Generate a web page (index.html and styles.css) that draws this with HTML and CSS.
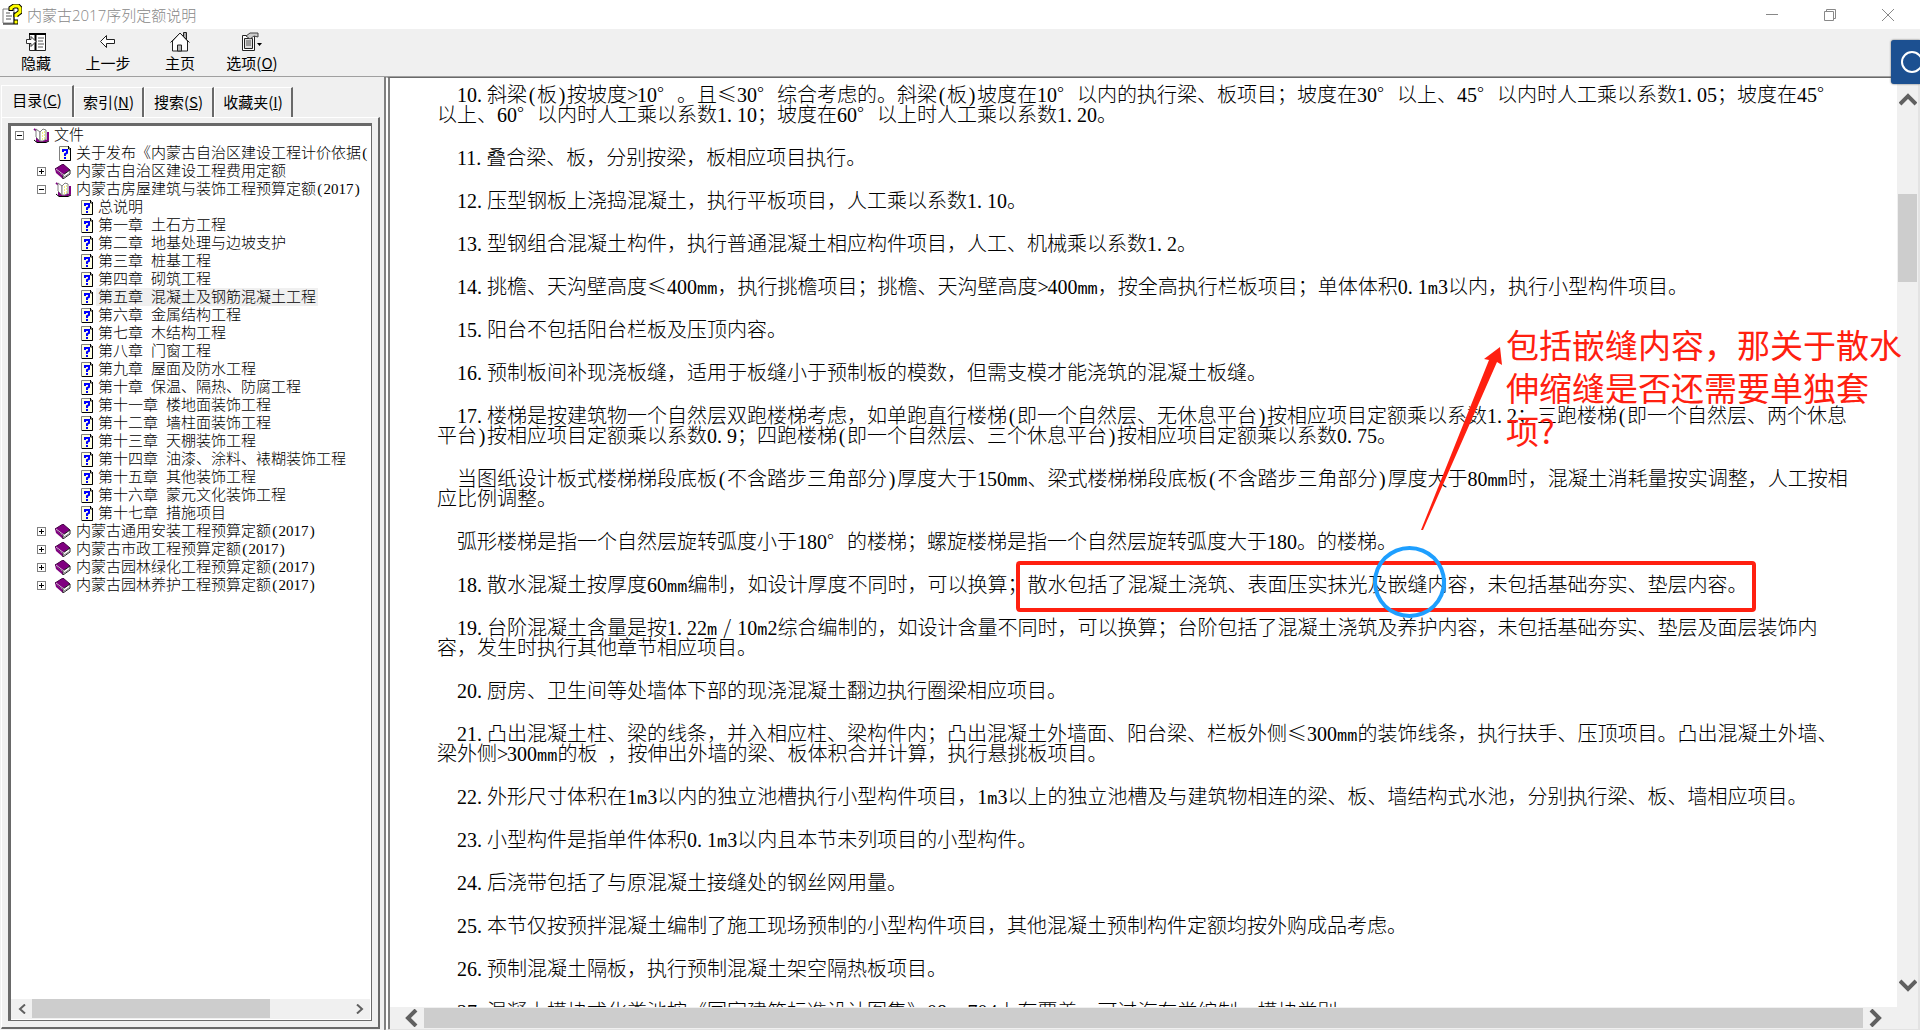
FILE: index.html
```html
<!DOCTYPE html>
<html lang="zh-CN">
  <head>
    <meta charset="UTF-8" />
    <meta name="viewport" content="width=device-width, initial-scale=1.0" />
    <title>内蒙古2017序列定额说明</title>
    <link rel="stylesheet" href="styles.css">
  </head>

  <body>
    <svg class="defs" width="0" height="0">
      <symbol id="open" viewBox="0 0 16 15">
        <path d="M1 1l3 2v10h9l2-1V4" fill="none" stroke="#800080" stroke-width="2" />
        <path d="M3 1l4 3v9L3 9z" fill="#fff" stroke="#808080" />
        <path d="M7 4l3-3 3 1v9l-3 2H7z" fill="#fff" stroke="#808080" />
        <path d="M9 5h1M11 4h1M9 8h1M11 7h1M9 11h1M11 10h1" stroke="#dd0" />
        <path d="M1 12l3 2.500h9l3-1.500" fill="none" stroke="#000" />
      </symbol>
      <symbol id="book" viewBox="0 0 16 15">
        <path d="M0 5l8-5 7 6-7 5z" fill="#800080" stroke="#400040" />
        <path d="M0 5l8 7v3L1 9z" fill="#800080" />
        <path d="M8 11l7-5v4l-7 5z" fill="#fff" stroke="#222" />
        <path d="M9 13l6-4" stroke="#808080" />
        <path d="M1 5l8 6" stroke="#fff" stroke-width="0.7" />
      </symbol>
      <symbol id="page" viewBox="0 0 12 15">
        <path d="M0.500 0.500h9l2 2v12h-11z" fill="#ffffe0" stroke="#808080" />
        <path d="M11.500 2v12.500H1M9.500 0v3h2" fill="none" stroke="#000" />
        <path d="M4 6V4h4v3L6 8v2M5 12h2" fill="none" stroke="#00f" stroke-width="2" />
      </symbol>
    </svg>

    <div class="window">
      <header class="titlebar">
        <svg class="app-icon" width="20" height="21" viewBox="0 0 20 21">
          <path d="M1 5h11v14H1z" fill="#fff" stroke="#808080" />
          <path d="M12 8v12H1" fill="none" stroke="#000" />
          <path d="M4 9h4M4 12h6M4 15h5" stroke="#555" />
          <path d="M9 7V4l3-2h4l2 2v4l-4 3v2M12 18h4" fill="none" stroke="#000" stroke-width="5" />
          <path d="M9 6V4l3-2h4l2 2v4l-4 3v2M12.500 18h3" fill="none" stroke="#ff0" stroke-width="3" />
        </svg>
        <h1>内蒙古2017序列定额说明</h1>
        <div class="window-buttons">
          <button type="button" aria-label="最小化">
            <svg width="12" height="12" viewBox="0 0 12 12"><path d="M0 5.500h12" /></svg>
          </button>
          <button type="button" aria-label="还原">
            <svg width="12" height="12" viewBox="0 0 12 12"><path d="M0.500 2.500h9v9h-9zM2.500 2V0.500h9v9H10" /></svg>
          </button>
          <button type="button" aria-label="关闭">
            <svg width="12" height="12" viewBox="0 0 12 12"><path d="M0 0l12 12M12 0L0 12" /></svg>
          </button>
        </div>
      </header>

      <nav class="toolbar">
        <button type="button">
          <svg width="20" height="20" viewBox="0 0 20 20">
            <path d="M3.500 1.500h16v17h-16z" fill="#fff" stroke="#222" />
            <path d="M3 2h17M9.500 2v16" stroke="#000" stroke-width="2" />
            <path d="M12 6h6M12 9h5M12 12h6M12 15h5" stroke="#555" />
            <path d="M0.500 7.500H5V4.500l5 5-5 5v-3H0.500z" fill="#fff" stroke="#333" />
          </svg>
          隐藏
        </button>
        <button type="button">
          <svg width="20" height="20" viewBox="0 0 20 20">
            <path d="M2.500 9.500l6-6v4h8v4h-8v4z" fill="#fff" stroke="#222" />
          </svg>
          上一步
        </button>
        <button type="button">
          <svg width="20" height="20" viewBox="0 0 20 20">
            <path d="M13.500 4V0.500h3V8" fill="#aaa" stroke="#222" />
            <path d="M2.500 9L10 1l7.500 8v10h-15z" fill="#fff" stroke="#222" />
            <path d="M0.500 10.500L10 1l9.500 9.500" fill="none" stroke="#222" />
            <path d="M7.500 19v-6h4v6z" fill="#bbb" stroke="#222" />
          </svg>
          主页
        </button>
        <button type="button">
          <svg width="20" height="20" viewBox="0 0 20 20">
            <path d="M0.500 3.500h12v15H0.500z" fill="#fff" stroke="#222" />
            <path d="M2.500 6.500h8v10h-8z" fill="#ddd" stroke="#222" />
            <path d="M4 9h5M4 11h5M4 13h5" stroke="#555" />
            <path d="M4 4l4-3h8v4l-4-1-4 3z" fill="#ccc" stroke="#444" />
            <path d="M15 11h5l-2.500 3z" />
          </svg>
          <span>选项(<u>O</u>)</span>
        </button>
      </nav>

      <main class="workspace">
        <aside class="sidebar">
          <div class="tabs" role="tablist">
            <button type="button" role="tab" class="tab active" aria-selected="true">目录(<u>C</u>)</button>
            <button type="button" role="tab" class="tab">索引(<u>N</u>)</button>
            <button type="button" role="tab" class="tab">搜索(<u>S</u>)</button>
            <button type="button" role="tab" class="tab last">收藏夹(<u>I</u>)</button>
          </div>
          <div class="tab-panel">
            <div class="tree-box">
              <div class="tree">
                <ul>
                  <li>
                    <div class="row"><button type="button" class="toggle minus" aria-label="折叠"></button><svg class="icon"><use href="#open" /></svg><a href="#">文件</a></div>
                    <ul>
                      <li><div class="row"><svg class="icon topic"><use href="#page" /></svg><a href="#">关于发布《内蒙古自治区建设工程计价依据<span class="p">(</span></a></div></li>
                      <li><div class="row"><button type="button" class="toggle" aria-label="展开"></button><svg class="icon"><use href="#book" /></svg><a href="#">内蒙古自治区建设工程费用定额</a></div></li>
                      <li>
                        <div class="row"><button type="button" class="toggle minus" aria-label="折叠"></button><svg class="icon"><use href="#open" /></svg><a href="#">内蒙古房屋建筑与装饰工程预算定额<span class="p">(</span>2017<span class="p">)</span></a></div>
                        <ul>
                          <li><div class="row"><svg class="icon topic"><use href="#page" /></svg><a href="#">总说明</a></div></li>
                          <li><div class="row"><svg class="icon topic"><use href="#page" /></svg><a href="#"><span class="no">第一章</span>土石方工程</a></div></li>
                          <li><div class="row"><svg class="icon topic"><use href="#page" /></svg><a href="#"><span class="no">第二章</span>地基处理与边坡支护</a></div></li>
                          <li><div class="row"><svg class="icon topic"><use href="#page" /></svg><a href="#"><span class="no">第三章</span>桩基工程</a></div></li>
                          <li><div class="row"><svg class="icon topic"><use href="#page" /></svg><a href="#"><span class="no">第四章</span>砌筑工程</a></div></li>
                          <li><div class="row"><svg class="icon topic"><use href="#page" /></svg><a href="#" class="current"><span class="no">第五章</span>混凝土及钢筋混凝土工程</a></div></li>
                          <li><div class="row"><svg class="icon topic"><use href="#page" /></svg><a href="#"><span class="no">第六章</span>金属结构工程</a></div></li>
                          <li><div class="row"><svg class="icon topic"><use href="#page" /></svg><a href="#"><span class="no">第七章</span>木结构工程</a></div></li>
                          <li><div class="row"><svg class="icon topic"><use href="#page" /></svg><a href="#"><span class="no">第八章</span>门窗工程</a></div></li>
                          <li><div class="row"><svg class="icon topic"><use href="#page" /></svg><a href="#"><span class="no">第九章</span>屋面及防水工程</a></div></li>
                          <li><div class="row"><svg class="icon topic"><use href="#page" /></svg><a href="#"><span class="no">第十章</span>保温、隔热、防腐工程</a></div></li>
                          <li><div class="row"><svg class="icon topic"><use href="#page" /></svg><a href="#"><span class="no">第十一章</span>楼地面装饰工程</a></div></li>
                          <li><div class="row"><svg class="icon topic"><use href="#page" /></svg><a href="#"><span class="no">第十二章</span>墙柱面装饰工程</a></div></li>
                          <li><div class="row"><svg class="icon topic"><use href="#page" /></svg><a href="#"><span class="no">第十三章</span>天棚装饰工程</a></div></li>
                          <li><div class="row"><svg class="icon topic"><use href="#page" /></svg><a href="#"><span class="no">第十四章</span>油漆、涂料、裱糊装饰工程</a></div></li>
                          <li><div class="row"><svg class="icon topic"><use href="#page" /></svg><a href="#"><span class="no">第十五章</span>其他装饰工程</a></div></li>
                          <li><div class="row"><svg class="icon topic"><use href="#page" /></svg><a href="#"><span class="no">第十六章</span>蒙元文化装饰工程</a></div></li>
                          <li><div class="row"><svg class="icon topic"><use href="#page" /></svg><a href="#"><span class="no">第十七章</span>措施项目</a></div></li>
                        </ul>
                      </li>
                      <li><div class="row"><button type="button" class="toggle" aria-label="展开"></button><svg class="icon"><use href="#book" /></svg><a href="#">内蒙古通用安装工程预算定额<span class="p">(</span>2017<span class="p">)</span></a></div></li>
                      <li><div class="row"><button type="button" class="toggle" aria-label="展开"></button><svg class="icon"><use href="#book" /></svg><a href="#">内蒙古市政工程预算定额<span class="p">(</span>2017<span class="p">)</span></a></div></li>
                      <li><div class="row"><button type="button" class="toggle" aria-label="展开"></button><svg class="icon"><use href="#book" /></svg><a href="#">内蒙古园林绿化工程预算定额<span class="p">(</span>2017<span class="p">)</span></a></div></li>
                      <li><div class="row"><button type="button" class="toggle" aria-label="展开"></button><svg class="icon"><use href="#book" /></svg><a href="#">内蒙古园林养护工程预算定额<span class="p">(</span>2017<span class="p">)</span></a></div></li>
                    </ul>
                  </li>
                </ul>
              </div>
              <div class="tree-scroll">
                <button type="button" aria-label="向左滚动"><svg width="8" height="10" viewBox="0 0 8 10"><path d="M7 0.500L2 5l5 4.500" stroke-width="2" /></svg></button>
                <div class="track"><div class="thumb"></div></div>
                <button type="button" aria-label="向右滚动"><svg width="8" height="10" viewBox="0 0 8 10"><path d="M1 0.500L6 5 1 9.500" stroke-width="2" /></svg></button>
              </div>
            </div>
          </div>
        </aside>

        <section class="viewer">
          <article class="doc">
            <p>10<span class="h">.</span>斜梁<span class="p">(</span>板<span class="p">)</span>按坡度<span class="h">&gt;</span>10<span class="w">°</span>。且<span class="w">≤</span>30<span class="w">°</span>综合考虑的。斜梁<span class="p">(</span>板<span class="p">)</span>坡度在10<span class="w">°</span>以内的执行梁、板项目；坡度在30<span class="w">°</span>以上、45<span class="w">°</span>以内时人工乘以系数1<span class="h">.</span>05；坡度在45<span class="w">°</span><br>以上、60<span class="w">°</span>以内时人工乘以系数1<span class="h">.</span>10；坡度在60<span class="w">°</span>以上时人工乘以系数1<span class="h">.</span>20。</p>
            <p>11<span class="h">.</span>叠合梁、板，分别按梁，板相应项目执行。</p>
            <p>12<span class="h">.</span>压型钢板上浇捣混凝土，执行平板项目，人工乘以系数1<span class="h">.</span>10。</p>
            <p>13<span class="h">.</span>型钢组合混凝土构件，执行普通混凝土相应构件项目，人工、机械乘以系数1<span class="h">.</span>2。</p>
            <p>14<span class="h">.</span>挑檐、天沟壁高度<span class="w">≤</span>400<span class="m">mm</span>，执行挑檐项目；挑檐、天沟壁高度<span class="h">&gt;</span>400<span class="m">mm</span>，按全高执行栏板项目；单体体积0<span class="h">.</span>1<span class="m">m</span>3以内，执行小型构件项目。</p>
            <p>15<span class="h">.</span>阳台不包括阳台栏板及压顶内容。</p>
            <p>16<span class="h">.</span>预制板间补现浇板缝，适用于板缝小于预制板的模数，但需支模才能浇筑的混凝土板缝。</p>
            <p>17<span class="h">.</span>楼梯是按建筑物一个自然层双跑楼梯考虑，如单跑直行楼梯<span class="p">(</span>即一个自然层、无休息平台<span class="p">)</span>按相应项目定额乘以系数1<span class="h">.</span>2；三跑楼梯<span class="p">(</span>即一个自然层、两个休息<br>平台<span class="p">)</span>按相应项目定额乘以系数0<span class="h">.</span>9；四跑楼梯<span class="p">(</span>即一个自然层、三个休息平台<span class="p">)</span>按相应项目定额乘以系数0<span class="h">.</span>75。</p>
            <p>当图纸设计板式楼梯梯段底板<span class="p">(</span>不含踏步三角部分<span class="p">)</span>厚度大于150<span class="m">mm</span>、梁式楼梯梯段底板<span class="p">(</span>不含踏步三角部分<span class="p">)</span>厚度大于80<span class="m">mm</span>时，混凝土消耗量按实调整，人工按相<br>应比例调整。</p>
            <p>弧形楼梯是指一个自然层旋转弧度小于180<span class="w">°</span>的楼梯；螺旋楼梯是指一个自然层旋转弧度大于180。的楼梯。</p>
            <p>18<span class="h">.</span>散水混凝土按厚度60<span class="m">mm</span>编制，如设计厚度不同时，可以换算；散水包括了混凝土浇筑、表面压实抹光及嵌缝内容，未包括基础夯实、垫层内容。</p>
            <p>19<span class="h">.</span>台阶混凝土含量是按1<span class="h">.</span>22<span class="m">m</span><span class="w slash">/</span>10<span class="m">m</span>2综合编制的，如设计含量不同时，可以换算；台阶包括了混凝土浇筑及养护内容，未包括基础夯实、垫层及面层装饰内<br>容，发生时执行其他章节相应项目。</p>
            <p>20<span class="h">.</span>厨房、卫生间等处墙体下部的现浇混凝土翻边执行圈梁相应项目。</p>
            <p>21<span class="h">.</span>凸出混凝土柱、梁的线条，并入相应柱、梁构件内；凸出混凝土外墙面、阳台梁、栏板外侧<span class="w">≤</span>300<span class="m">mm</span>的装饰线条，执行扶手、压顶项目。凸出混凝土外墙、<br>梁外侧<span class="h">&gt;</span>300<span class="m">mm</span>的板<span class="h">&nbsp;</span>，按伸出外墙的梁、板体积合并计算，执行悬挑板项目。</p>
            <p>22<span class="h">.</span>外形尺寸体积在1<span class="m">m</span>3以内的独立池槽执行小型构件项目，1<span class="m">m</span>3以上的独立池槽及与建筑物相连的梁、板、墙结构式水池，分别执行梁、板、墙相应项目。</p>
            <p>23<span class="h">.</span>小型构件是指单件体积0<span class="h">.</span>1<span class="m">m</span>3以内且本节未列项目的小型构件。</p>
            <p>24<span class="h">.</span>后浇带包括了与原混凝土接缝处的钢丝网用量。</p>
            <p>25<span class="h">.</span>本节仅按预拌混凝土编制了施工现场预制的小型构件项目，其他混凝土预制构件定额均按外购成品考虑。</p>
            <p>26<span class="h">.</span>预制混凝土隔板，执行预制混凝土架空隔热板项目。</p>
            <p>27<span class="h">.</span>混凝土模块式化粪池按《国家建筑标准设计图集》08<span class="m">SS</span>704上有覆盖、可过汽车类编制，模块类别</p>
          </article>
          <div class="v-scroll">
            <button type="button" aria-label="向上滚动"><svg width="18" height="14" viewBox="0 0 18 14"><path d="M1 12l8-8 8 8" stroke-width="4" /></svg></button>
            <div class="track"><div class="thumb"></div></div>
            <button type="button" aria-label="向下滚动"><svg width="18" height="14" viewBox="0 0 18 14"><path d="M1 2l8 8 8-8" stroke-width="4" /></svg></button>
          </div>
          <div class="h-scroll">
            <button type="button" class="left" aria-label="向左滚动"><svg width="14" height="18" viewBox="0 0 14 18"><path d="M12 1L4 9l8 8" stroke-width="4" /></svg></button>
            <div class="track"><div class="thumb"></div></div>
            <button type="button" class="right" aria-label="向右滚动"><svg width="14" height="18" viewBox="0 0 14 18"><path d="M2 1l8 8-8 8" stroke-width="4" /></svg></button>
          </div>

          <div class="mark-box"></div>
          <div class="mark-circle"></div>
          <svg class="mark-arrow" width="82" height="184" viewBox="0 0 82 184">
            <path d="M0 183L68 13l-5-1L79 0l2 18-5-3L2 183z" />
          </svg>
          <div class="mark-note">包括嵌缝内容，那关于散水<br>伸缩缝是否还需要单独套<br>项?</div>
        </section>
      </main>

      <button type="button" class="dock" aria-label="搜索">
        <svg width="20" height="24" viewBox="0 0 20 24"><circle cx="12" cy="12" r="10" /></svg>
      </button>
    </div>
  </body>
</html>
```
FILE: styles.css
```css
* {
  box-sizing: border-box;
}

body {
  margin: 0;
  background-color: #f0f0f0;
  color: #000;
  font-family: "Noto Sans CJK SC", sans-serif;
  font-size: 15px;
  text-spacing-trim: space-all;
}

button {
  margin: 0;
  padding: 0;
  border: none;
  background: none;
  color: inherit;
  font: inherit;
}

ul {
  margin: 0;
  padding: 0;
  list-style: none;
}

a {
  color: inherit;
  text-decoration: none;
}

.defs {
  position: absolute;
}

.window {
  position: relative;
  display: flex;
  flex-direction: column;
  height: 100vh;
  overflow: hidden;
}

/* title bar */
.titlebar {
  display: flex;
  flex: none;
  align-items: center;
  height: 29px;
  padding-left: 2px;
  background-color: #fff;
}

.titlebar h1 {
  flex: 1;
  margin: 0 0 0 5px;
  color: #888;
  font-family: "Open Sans", "Noto Sans CJK SC", sans-serif;
  font-size: 15px;
  font-weight: 300;
  line-height: 22px;
}

.window-buttons {
  display: flex;
  padding-right: 3px;
}

.window-buttons button {
  display: flex;
  align-items: center;
  justify-content: center;
  width: 58px;
  height: 29px;
}

.window-buttons svg {
  fill: none;
  stroke: #888;
}

/* toolbar */
.toolbar {
  display: flex;
  flex: none;
  height: 48px;
  border-bottom: 1px solid #a0a0a0;
}

.toolbar button {
  display: flex;
  flex-direction: column;
  align-items: center;
  width: 72px;
  padding-top: 3px;
  line-height: 22px;
}

.workspace {
  display: flex;
  flex: 1;
  min-height: 0;
}

/* left side */
.sidebar {
  display: flex;
  flex: none;
  flex-direction: column;
  width: 384px;
  padding: 8px 4px 1px 1px;
}

.tabs {
  display: flex;
  align-items: flex-end;
  height: 32px;
}

.tab {
  width: 70px;
  height: 30px;
  padding-bottom: 2px;
  border-top: 1px solid #fff;
  border-left: 1px solid #fff;
  border-right: 2px solid #696969;
}

.tab.active {
  width: 73px;
  height: 32px;
  padding-bottom: 4px;
}

.tab.last {
  width: 79px;
}

.tab-panel {
  display: flex;
  flex: 1;
  min-height: 0;
  padding: 5px 6px 6px 6px;
  border: 1px solid #fff;
  border-right: 2px solid #696969;
  border-bottom: 2px solid #696969;
}

.tree-box {
  display: flex;
  flex: 1;
  flex-direction: column;
  min-width: 0;
  padding: 0 1px 1px 0;
  border: 1px solid #696969;
  border-top-width: 3px;
  border-left-width: 3px;
  background-color: #fff;
}

.tree {
  flex: 1;
  overflow: hidden;
  font-family: "Liberation Serif", "Noto Sans CJK SC", serif;
  font-weight: 300;
}

.tree li ul {
  padding-left: 22px;
}

.row {
  display: flex;
  align-items: center;
  height: 18px;
  padding-left: 4px;
  line-height: 18px;
  white-space: nowrap;
}

.toggle {
  position: relative;
  flex: none;
  width: 9px;
  height: 9px;
  margin-right: 9px;
  border: 1px solid #808080;
}

.toggle::before,
.toggle::after {
  content: "";
  position: absolute;
  top: 3px;
  left: 1px;
  width: 5px;
  height: 1px;
  background-color: #000;
}

.toggle::after {
  top: 1px;
  left: 3px;
  width: 1px;
  height: 5px;
}

.toggle.minus::after {
  display: none;
}

.icon {
  flex: none;
  width: 16px;
  height: 15px;
  margin-right: 3px;
}

.icon.topic {
  width: 12px;
  margin-left: 22px;
}

.row a {
  padding: 0 2px;
}

.row .current {
  background-color: #f0f0f0;
}

.no {
  margin-right: 8px;
}

/* scrollbars */
.tree-scroll,
.h-scroll {
  display: flex;
  flex: none;
  background-color: #f0f0f0;
}

.tree-scroll {
  height: 20px;
}

.tree-scroll button {
  width: 21px;
}

.track {
  flex: 1;
}

.thumb {
  background-color: #cdcdcd;
}

.tree-scroll .thumb {
  width: 75%;
  height: 19px;
}

.tree-scroll svg,
.v-scroll svg,
.h-scroll svg {
  display: block;
  margin: auto;
  fill: none;
  stroke: #606060;
}

/* document */
.viewer {
  position: relative;
  display: grid;
  flex: 1;
  grid-template-rows: 1fr 22px;
  grid-template-columns: 1fr 21px;
  min-width: 0;
  border-top: 1px solid #696969;
  border-right: 2px solid #e3e3e3;
  border-bottom: 1px solid #e3e3e3;
  border-left: 6px double #808080;
  background-color: #fff;
}

.doc {
  padding: 7px 0 0 47px;
  font-family: "Liberation Serif", "Noto Sans CJK SC", serif;
  font-size: 20px;
  font-weight: 300;
  line-height: 20px;
  white-space: nowrap;
  /* the last line runs under the scrollbar */
  height: 0;
  min-height: 100%;
  overflow: hidden;
}

.doc p {
  margin: 0 0 23px;
  text-indent: 20px;
}

/* half-width, full-width and latin letters of the text grid,
   with no height of their own so that every line keeps 20px */
.h,
.p,
.w {
  display: inline-block;
  width: 0.5em;
  line-height: 0;
  text-indent: 0;
}

.p {
  text-align: center;
}

.w {
  width: 1em;
  font-family: "Noto Sans CJK SC", sans-serif;
}

.slash {
  text-align: center;
}

.m {
  font-family: "Liberation Mono", monospace;
  font-size: 17px;
  line-height: 0;
}

.v-scroll {
  display: flex;
  flex-direction: column;
  background-color: #f0f0f0;
}

.v-scroll button {
  height: 42px;
}

.v-scroll .thumb {
  width: 19px;
  height: 88px;
  margin: 74px 1px 0;
}

.h-scroll {
  grid-column: 1 / 3;
  padding: 1px 21px 1px 0;
}

.h-scroll button {
  width: 34px;
}

.h-scroll .left {
  padding-left: 8px;
}

.h-scroll .right {
  padding-right: 8px;
}

.h-scroll .thumb {
  height: 20px;
}

/* annotations over the text */
.mark-box {
  position: absolute;
  top: 483px;
  left: 626px;
  width: 740px;
  height: 51px;
  border: 4px solid #ff2010;
  border-radius: 4px;
}

.mark-circle {
  position: absolute;
  top: 468px;
  left: 983px;
  width: 73px;
  height: 72px;
  border: 4px solid #1e9fff;
  border-radius: 50%;
}

.mark-arrow {
  position: absolute;
  top: 269px;
  left: 1031px;
  fill: #ff2010;
}

.mark-note {
  position: absolute;
  top: 245px;
  left: 1116px;
  color: #ff2010;
  font-family: "Noto Sans CJK SC", sans-serif;
  font-size: 33px;
  font-weight: 400;
  line-height: 43px;
  white-space: nowrap;
}

.dock {
  position: absolute;
  top: 40px;
  right: 0;
  width: 29px;
  height: 44px;
  padding-left: 9px;
  border-radius: 3px 0 0 3px;
  background-color: #1c5091;
  box-shadow: 0 0 2px #555;
}

.dock svg {
  display: block;
  fill: none;
  stroke: #fff;
  stroke-width: 2;
}
```
